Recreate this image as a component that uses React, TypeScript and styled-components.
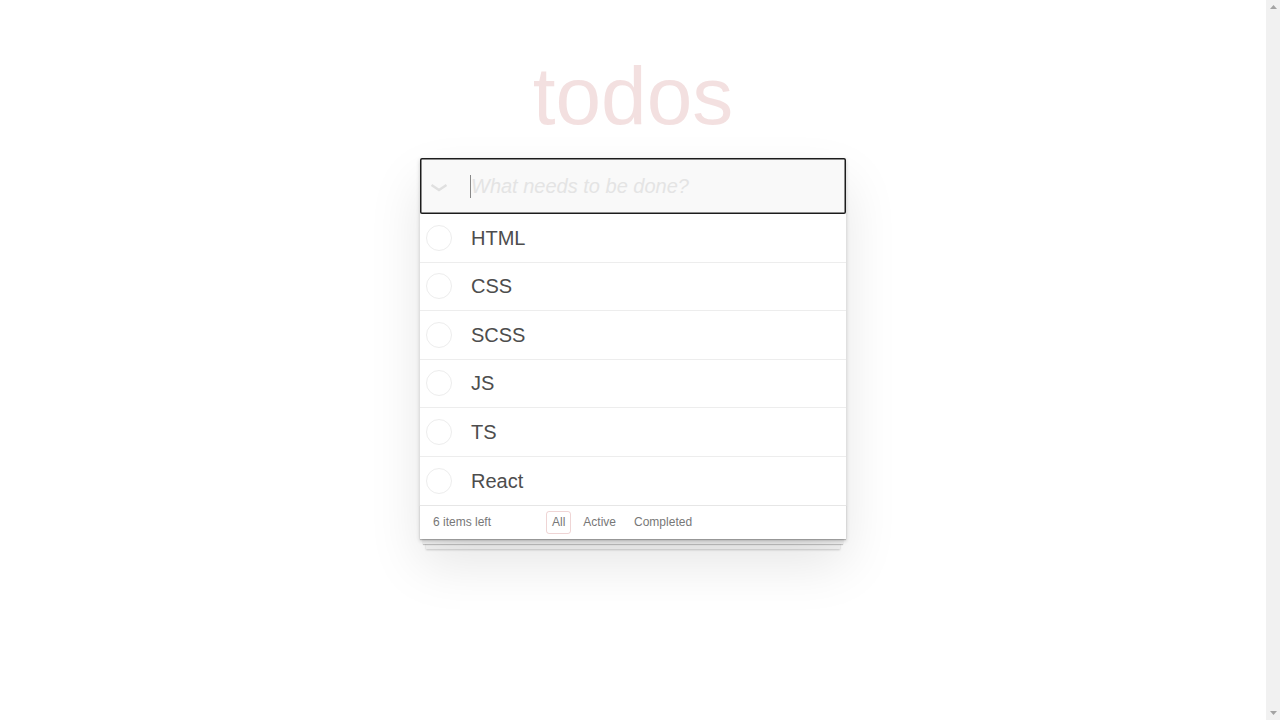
import React from 'react';
import styled, { createGlobalStyle } from 'styled-components';

const GlobalStyle = createGlobalStyle`
  body {
    margin: 0;
    background: #fff;
    font-family: "Liberation Sans", Arial, sans-serif;
    color: #4d4d4d;
    overflow: hidden;
  }
`;

const Page = styled.div`
  display: flex;
  height: 100vh;
`;

const Content = styled.main`
  flex: 1;
  display: flex;
  flex-direction: column;
  align-items: center;
  padding: 55px 0 80px;
`;

// browser scrollbar strip on the right edge
const ScrollTrack = styled.div`
  width: 14px;
  display: flex;
  flex-direction: column;
  justify-content: space-between;
  align-items: center;
  padding: 5px 0;
  box-sizing: border-box;
  background: #f1f1f1;
`;

const Title = styled.h1`
  margin: 0;
  height: 82px;
  font-size: 82px;
  line-height: 1;
  font-weight: 400;
  color: rgba(175, 47, 47, 0.15);
  text-align: center;
`;

const TodoApp = styled.section`
  position: relative;
  width: 426px;
  margin-top: 21px;
  background: #fff;
  box-shadow: 0 2px 4px 0 rgba(0, 0, 0, 0.2), 0 25px 50px 0 rgba(0, 0, 0, 0.1);
`;

const Header = styled.div`
  position: relative;
  height: 56px;
  display: flex;
  align-items: center;
  background: #f9f9f9;
  box-shadow: inset 0 0 0 1.5px #1c1c1c;
  border-radius: 2px;
`;

const ToggleAll = styled.span`
  position: absolute;
  left: 10px;
  top: 25px;
  line-height: 0;
`;

const NewTodo = styled.input`
  flex: 1;
  height: 100%;
  box-sizing: border-box;
  padding: 0 16px 0 51px;
  border: none;
  outline: none;
  background: transparent;
  font-family: inherit;
  font-size: 20px;
  color: #4d4d4d;
  &::placeholder {
    font-style: italic;
    color: #e4e4e4;
  }
`;

const Caret = styled.span`
  position: absolute;
  left: 50px;
  top: 17px;
  width: 1px;
  height: 23px;
  background: #888;
`;

const List = styled.ul`
  list-style: none;
  margin: 0;
  padding: 0;
`;

const Row = styled.li`
  height: 48.5px;
  box-sizing: border-box;
  display: flex;
  align-items: center;
  padding-left: 6px;
  border-bottom: 1px solid #ededed;
  &:last-child {
    border-bottom: none;
  }
`;

const Check = styled.span`
  width: 26px;
  height: 26px;
  box-sizing: border-box;
  border: 1px solid #ededed;
  border-radius: 50%;
`;

const Label = styled.span`
  margin-left: 19px;
  font-size: 20px;
  line-height: 24px;
  color: #4d4d4d;
`;

const Footer = styled.footer`
  position: relative;
  height: 34px;
  box-sizing: border-box;
  display: flex;
  align-items: center;
  padding-left: 13px;
  border-top: 1px solid #e6e6e6;
  font-size: 12px;
  line-height: 15px;
  color: #777;
  &::before {
    content: '';
    position: absolute;
    right: 0;
    bottom: 0;
    left: 0;
    height: 34px;
    overflow: hidden;
    z-index: -1;
    box-shadow: 0 1px 1px rgba(0, 0, 0, 0.2), 0 8px 0 -3px #f6f6f6,
      0 9px 1px -3px rgba(0, 0, 0, 0.2), 0 16px 0 -6px #f6f6f6,
      0 17px 2px -6px rgba(0, 0, 0, 0.2);
  }
`;

const Count = styled.span`
  width: 113px;
`;

const Filters = styled.div`
  display: flex;
  gap: 6px;
`;

const Filter = styled.a<{ selected?: boolean }>`
  padding: 3px 5px;
  line-height: 15px;
  border: 1px solid ${p => (p.selected ? 'rgba(175, 47, 47, 0.2)' : 'transparent')};
  border-radius: 3px;
  color: #777;
  text-decoration: none;
`;

const todos = ['HTML', 'CSS', 'SCSS', 'JS', 'TS', 'React'];

const App: React.FC = () => {
  return (
    <>
      <GlobalStyle />
      <Page>
        <Content>
          <Title>todos</Title>
          <TodoApp>
            <Header>
              <ToggleAll>
                <svg width="18" height="9" viewBox="0 0 18 9">
                  <polyline points="1.5,2 9,7 16.5,2" fill="none" stroke="#e0e0e0" strokeWidth="2.4" />
                </svg>
              </ToggleAll>
              <NewTodo placeholder="What needs to be done?" />
              <Caret />
            </Header>
            <List>
              {todos.map(t => (
                <Row key={t}>
                  <Check />
                  <Label>{t}</Label>
                </Row>
              ))}
            </List>
            <Footer>
              <Count>6 items left</Count>
              <Filters>
                <Filter href="#/" selected>All</Filter>
                <Filter href="#/active">Active</Filter>
                <Filter href="#/completed">Completed</Filter>
              </Filters>
            </Footer>
          </TodoApp>
        </Content>
        <ScrollTrack>
          <svg width="7" height="4" viewBox="0 0 7 4">
            <polygon points="0,4 7,4 3.5,0" fill="#a3a3a3" />
          </svg>
          <svg width="7" height="4" viewBox="0 0 7 4">
            <polygon points="0,0 7,0 3.5,4" fill="#a3a3a3" />
          </svg>
        </ScrollTrack>
      </Page>
    </>
  );
};

export default App;
